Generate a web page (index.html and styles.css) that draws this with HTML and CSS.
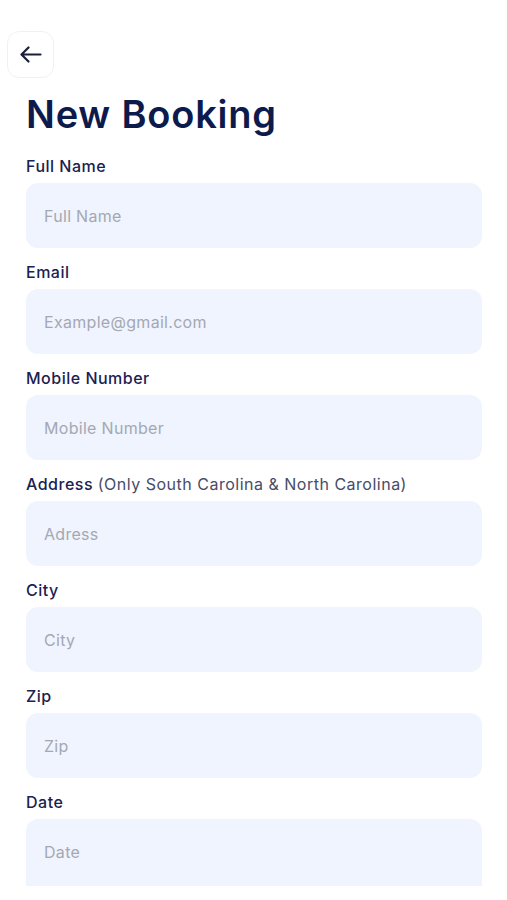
FILE: index.html
```html
<!doctype html>
<html lang="en">
<head>
    <meta charset="UTF-8">
    <meta name="viewport" content="width=device-width, initial-scale=1.0">
    <title>New Booking</title>
    <link rel="stylesheet" href="styles.css">
</head>
<body>
    <div class="screen">
        <div class="top-bar">
            <button class="back-btn" type="button" aria-label="Back">
                <svg width="22" height="17" viewBox="0 0 22 17" fill="none">
                    <path d="M20.5 8.5H2 M8.5 1.5 1.5 8.5 8.5 15.5" stroke="#1b1f3b" stroke-width="2.2" stroke-linecap="round" stroke-linejoin="round"/>
                </svg>
            </button>
        </div>
        <h1 class="title">New Booking</h1>
        <form class="booking-form">
            <div class="field">
                <label for="fullName">Full Name</label>
                <input type="text" id="fullName" placeholder="Full Name">
            </div>
            <div class="field">
                <label for="email">Email</label>
                <input type="email" id="email" placeholder="Example@gmail.com">
            </div>
            <div class="field">
                <label for="mobile">Mobile Number</label>
                <input type="tel" id="mobile" placeholder="Mobile Number">
            </div>
            <div class="field">
                <label for="address">Address <span class="hint">(Only South Carolina &amp; North Carolina)</span></label>
                <input type="text" id="address" placeholder="Adress">
            </div>
            <div class="field">
                <label for="city">City</label>
                <input type="text" id="city" placeholder="City">
            </div>
            <div class="field">
                <label for="zip">Zip</label>
                <input type="text" id="zip" placeholder="Zip">
            </div>
            <div class="field">
                <label for="date">Date</label>
                <input type="text" id="date" class="last-input" placeholder="Date">
            </div>
        </form>
    </div>
</body>
</html>
```

FILE: styles.css
```css
* {margin: 0; padding: 0; box-sizing: border-box;}
body {
    background: #ffffff;
    font-family: Inter, "Noto Sans", sans-serif;
    color: #1a1f4b;
}
.screen {
    height: 886px;
    overflow: hidden;
    padding: 31px 25px 0 26px;
}
.top-bar {
    display: flex;
    margin-left: -19px;
}
.back-btn {
    width: 47px;
    height: 47px;
    display: flex;
    align-items: center;
    justify-content: center;
    background: #ffffff;
    border: 1px solid #f1f1f4;
    border-radius: 12px;
    cursor: pointer;
}
.title {
    margin-top: 14px;
    font-size: 38px;
    line-height: 44px;
    font-weight: 600;
    color: #0d1a4c;
    letter-spacing: 0.8px;
}
.booking-form {
    margin-top: 20px;
    display: flex;
    flex-direction: column;
    gap: 14px;
}
.field {
    display: flex;
    flex-direction: column;
    gap: 7px;
}
label {
    font-size: 16px;
    line-height: 20px;
    font-weight: 500;
    color: #1b2150;
    letter-spacing: 0.5px;
}
.hint {
    font-weight: 400;
    color: #474c68;
}
input {
    height: 65px;
    width: 100%;
    border: none;
    border-radius: 12px;
    background: #eff4ff;
    padding: 0 18px;
    font-family: inherit;
    font-size: 16px;
    letter-spacing: 0.3px;
    color: #1a1f4b;
    outline: none;
}
.last-input {
    height: 80px;
    padding-bottom: 14px;
}
input::placeholder {
    color: #a5a8b1;
}
```
